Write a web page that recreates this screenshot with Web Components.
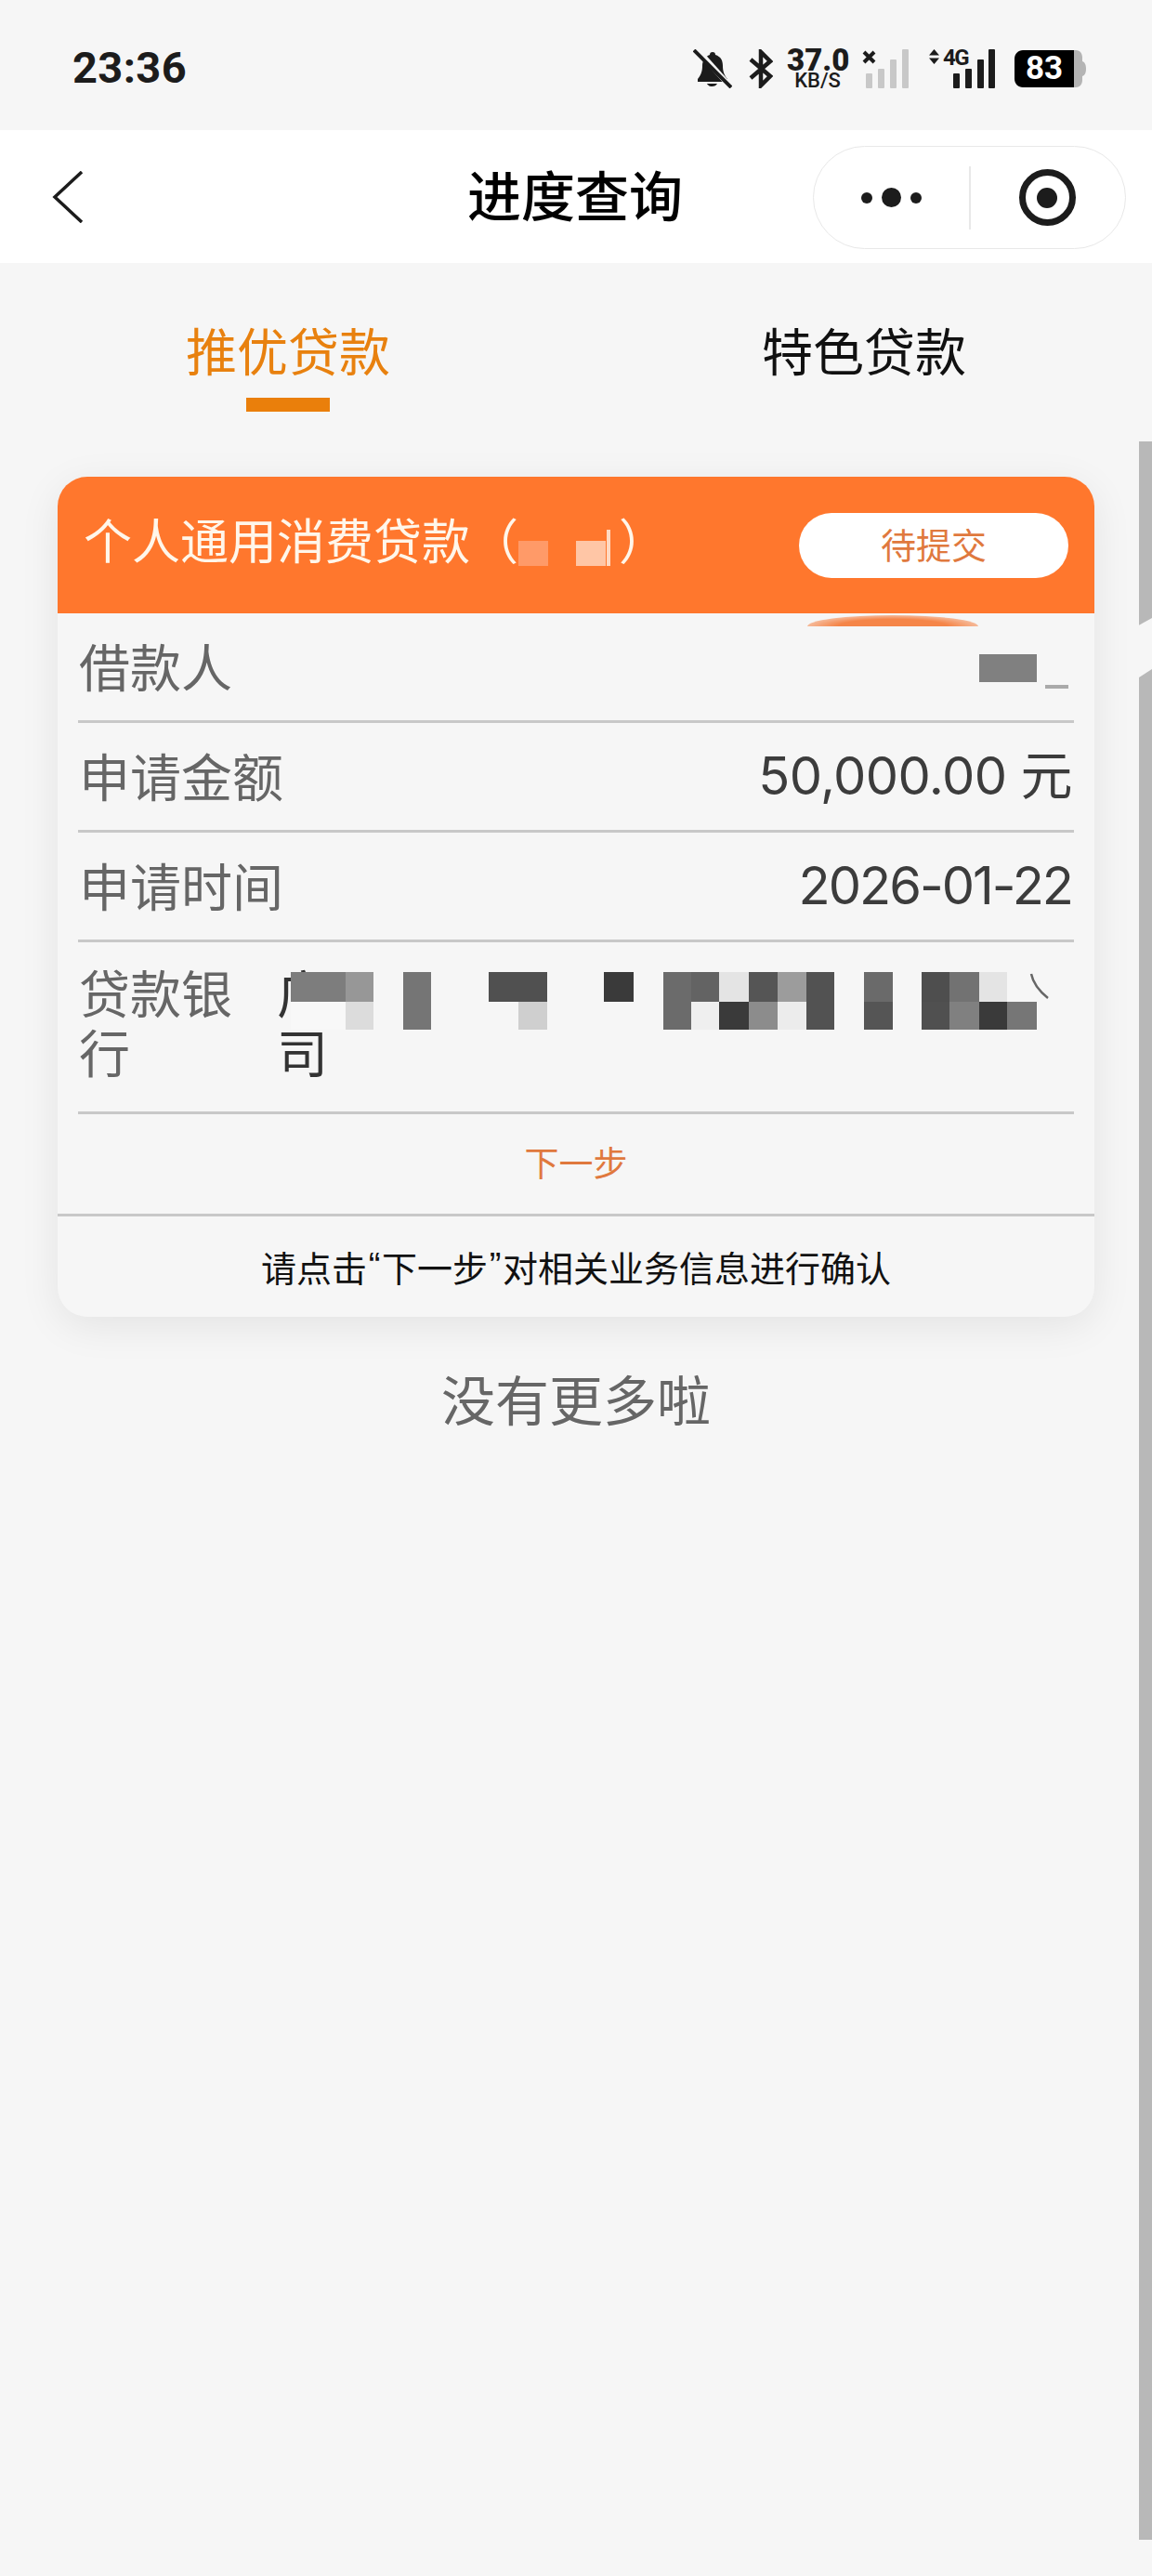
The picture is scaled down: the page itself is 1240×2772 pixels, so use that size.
<!DOCTYPE html>
<html lang="zh">
<head>
<meta charset="utf-8">
<title>进度查询</title>
<style>
  html, body { margin: 0; padding: 0; background: #f6f6f6; }
  body { width: 1240px; height: 2772px; overflow: hidden; font-family: "Noto Sans CJK SC", sans-serif; }
</style>
</head>
<body>
<status-bar></status-bar>
<nav-bar title="进度查询"></nav-bar>
<loan-tabs></loan-tabs>
<loan-card>
  <span slot="title">个人通用消费贷款</span>
  <span slot="status">待提交</span>
  <info-row label="借款人"></info-row>
  <info-row label="申请金额" value="50,000.00 元" spacing="-0.6"></info-row>
  <info-row label="申请时间" value="2026-01-22" spacing="-2"></info-row>
  <bank-row label="贷款银行"></bank-row>
</loan-card>
<end-note>没有更多啦</end-note>
<scroll-mark></scroll-mark>

<script>
class StatusBar extends HTMLElement {
  constructor () {
    super()
    this.shadow = this.attachShadow({ mode: 'open' })
  }

  connectedCallback () {
    this.shadow.innerHTML =
      /* html */
      `
      <style>
        :host { display: flex; align-items: center; height: 140px; box-sizing: border-box; padding: 8px 71px 0 78px; color: #1c1c1c; }
        .time { font: 700 47px/1 Roboto, sans-serif; letter-spacing: 0.4px; flex: 1; margin-top: -4px; }
        svg { display: block; }
        .speed { width: 66px; margin: 0 19px 0 15px; text-align: center; font-family: Roboto, sans-serif; font-weight: 700; }
        .speed b { display: block; font-size: 33px; line-height: 25px; }
        .speed i { display: block; font-style: normal; font-size: 22px; line-height: 19px; font-weight: 500; }
        .net { position: relative; width: 71px; height: 42px; }
        .net span { position: absolute; left: 15px; top: -5px; font: 700 24px/28px Roboto, sans-serif; letter-spacing: -1.500px; }
        .battery { position: relative; width: 77px; height: 40px; margin-left: 21px; font: 700 35px/40px Roboto, sans-serif; color: #fff; }
        .battery svg { position: absolute; left: 0; top: 0; }
        .battery span { position: absolute; left: 0; top: 0; width: 64px; text-align: center; }
      </style>
      <div class="time">23:36</div>
      <svg width="42" height="42" viewBox="0 0 42 42" fill="#1c1c1c">
        <path d="M21 3c2 0 3 1 3 3 6 2 8 6 8 12 0 5 1 9 5 14v3H5v-3c4-5 5-9 5-14 0-6 3-10 8-12 0-2 1-3 3-3z"/>
        <path d="M15 37h11c-1 2-3 3-5.500 3S16 39 15 37z"/>
        <path d="M5 1l36 40" stroke="#f6f6f6" stroke-width="6"/>
        <path d="M1 1l40 40" stroke="#1c1c1c" stroke-width="4"/>
      </svg>
      <svg width="26" height="42" viewBox="0 0 26 42" fill="none" stroke="#1c1c1c" stroke-width="4.500" style="margin-left:18px">
        <path d="M2 11l21 18-10 10V3l10 10L2 31"/>
      </svg>
      <div class="speed"><b>37.0</b><i>KB/S</i></div>
      <svg width="46" height="42" viewBox="0 0 46 42" style="margin-right:22px;overflow:visible">
        <g fill="#c8c8c8">
          <rect x="0" y="26" width="7" height="16" rx="1"/>
          <rect x="13" y="21" width="7" height="21" rx="1"/>
          <rect x="26" y="11" width="7" height="31" rx="1"/>
          <rect x="39" y="0" width="7" height="42" rx="1"/>
        </g>
        <path d="M-2 3l11 11M9 3L-2 14" stroke="#1c1c1c" stroke-width="4"/>
      </svg>
      <div class="net">
        <svg width="71" height="42" viewBox="0 0 71 42" fill="#1c1c1c">
          <path d="M5.500 0L11 6.500H0zM5.500 16L0 9.500h11z"/>
          <rect x="26" y="26" width="7" height="16" rx="1"/>
          <rect x="39" y="21" width="7" height="21" rx="1"/>
          <rect x="52" y="11" width="7" height="31" rx="1"/>
          <rect x="64" y="0" width="7" height="42" rx="1"/>
        </svg>
        <span>4G</span>
      </div>
      <div class="battery">
        <svg width="77" height="40" viewBox="0 0 77 40">
          <path d="M60 0h6c5 0 7 4 7 8v24c0 4-2 8-7 8h-6z M73 12c3 1 4 4 4 8s-1 7-4 8z" fill="#b4b4b4"/>
          <path d="M9 0h55v40H9c-5 0-9-4-9-9V9c0-5 4-9 9-9z" fill="#000"/>
        </svg>
        <span>83</span>
      </div>
      `
  }
}

class NavBar extends HTMLElement {
  constructor () {
    super()
    this.shadow = this.attachShadow({ mode: 'open' })
  }

  connectedCallback () {
    this.shadow.innerHTML =
      /* html */
      `
      <style>
        :host { display: block; position: relative; height: 143px; background: #fff; }
        .back { position: absolute; left: 56px; top: 44px; }
        h1 { margin: 0; padding-right: 2px; font: 500 58px/137px "Noto Sans CJK SC", sans-serif; color: #000; text-align: center; }
        .capsule { position: absolute; left: 875px; top: 17px; width: 337px; height: 111px; box-sizing: border-box; border: 1.500px solid #e8e8e8; border-radius: 56px; display: flex; align-items: center; background: #fff; }
        .more { width: 167px; display: flex; justify-content: center; align-items: center; gap: 10px; }
        .more i { width: 12px; height: 12px; border-radius: 50%; background: #1c1c1c; }
        .more i.big { width: 21px; height: 21px; }
        .sep { width: 1.500px; height: 68px; background: #e8e8e8; }
        .target { flex: 1; display: flex; justify-content: center; padding-right: 1px; }
        .ring { width: 61px; height: 61px; box-sizing: border-box; border: 7px solid #1c1c1c; border-radius: 50%; display: flex; align-items: center; justify-content: center; }
        .ring i { width: 22px; height: 22px; border-radius: 50%; background: #1c1c1c; }
      </style>
      <svg class="back" width="36" height="56" viewBox="0 0 36 56" fill="none" stroke="#1c1c1c" stroke-width="3.500">
        <path d="M32 1L3 28l29 27"/>
      </svg>
      <h1>${this.getAttribute('title')}</h1>
      <div class="capsule">
        <div class="more"><i></i><i class="big"></i><i></i></div>
        <div class="sep"></div>
        <div class="target"><div class="ring"><i></i></div></div>
      </div>
      `
  }
}

class LoanTabs extends HTMLElement {
  constructor () {
    super()
    this.shadow = this.attachShadow({ mode: 'open' })
  }

  connectedCallback () {
    this.shadow.innerHTML =
      /* html */
      `
      <style>
        :host { display: grid; grid-template-columns: 620px 620px; height: 230px; font: 400 55px/1 "Noto Sans CJK SC", sans-serif; color: #111; }
        .tab { display: flex; flex-direction: column; align-items: center; padding-top: 64px; }
        .tab span { line-height: 56px; }
        .active { color: #e8810f; }
        .active::after { content: ''; width: 90px; height: 15px; margin-top: 25px; background: #ea7f0b; }
      </style>
      <div class="tab active"><span>推优贷款</span></div>
      <div class="tab"><span>特色贷款</span></div>
      `
  }
}

class LoanCard extends HTMLElement {
  constructor () {
    super()
    this.shadow = this.attachShadow({ mode: 'open' })
  }

  connectedCallback () {
    this.shadow.innerHTML =
      /* html */
      `
      <style>
        :host { display: block; position: relative; width: 1116px; height: 904px; margin-left: 62px; border-radius: 32px; background: #f6f6f6; box-shadow: 0 10px 44px rgba(0,0,0,.08); font-family: "Noto Sans CJK SC", sans-serif; }
        header { position: relative; height: 147px; box-sizing: border-box; padding: 39px 28px 0 28px; border-radius: 32px 32px 0 0; background: #ff772d; display: flex; justify-content: space-between; align-items: flex-start; }
        .name { font-size: 52px; line-height: 56px; color: #fff6ea; display: flex; }
        .paren { white-space: pre; }
        .mask { position: absolute; top: 69px; height: 27px; }
        .m1 { left: 496px; width: 32px; background: #ff9a68; }
        .m2 { left: 558px; width: 32px; background: #ffc6a6; }
        .m3 { left: 591px; top: 57px; width: 4px; height: 39px; background: #ffd9c2; }
        .pill { width: 290px; height: 70px; border-radius: 35px; background: #fff; color: #e0793e; font-size: 38px; line-height: 66px; text-align: center; }
        .smear { position: absolute; left: 807px; top: 149px; width: 184px; height: 12px; border-radius: 50% 50% 0 0 / 100% 100% 0 0; background: radial-gradient(ellipse at 50% 100%, #f58548 45%, rgba(245,133,72,0) 100%); }
        .rows { display: block; }
        .next { height: 110px; box-sizing: border-box; padding-bottom: 6px; display: flex; align-items: center; justify-content: center; font-size: 37px; color: #e0793e; border-bottom: 3px solid #c8c8c8; }
        .tip { height: 110px; box-sizing: border-box; padding-bottom: 4px; display: flex; align-items: center; justify-content: center; font-size: 38px; color: #111; }
        .tip q { quotes: none; font-family: "Liberation Sans", sans-serif; width: 16px; text-align: center; }
      </style>
      <header>
        <div class="name"><slot name="title"></slot><span class="paren">（</span></div>
        <div class="paren name" style="position:absolute;left:604px;top:39px">）</div>
        <i class="mask m1"></i><i class="mask m2"></i><i class="mask m3"></i>
        <div class="pill"><slot name="status"></slot></div>
      </header>
      <i class="smear"></i>
      <div class="rows"><slot></slot></div>
      <div class="next">下一步</div>
      <div class="tip"><span>请点击</span><q>“</q><span>下一步</span><q>”</q><span>对相关业务信息进行确认</span></div>
      `
  }
}

class InfoRow extends HTMLElement {
  constructor () {
    super()
    this.shadow = this.attachShadow({ mode: 'open' })
  }

  connectedCallback () {
    const value = this.getAttribute('value')
    const spacing = this.getAttribute('spacing') || 0
    this.shadow.innerHTML =
      /* html */
      `
      <style>
        :host { display: flex; position: relative; justify-content: space-between; align-items: center; height: 118px; box-sizing: border-box; margin: 0 22px; padding: 0 2px 5px 1px; border-bottom: 3px solid #c8c8c8; font: 400 55px/1 "Noto Sans CJK SC", sans-serif; color: #666; }
        .value { margin-top: 3px; font-family: Inter, "Noto Sans CJK SC", sans-serif; font-size: 56px; letter-spacing: ${spacing}px; color: #3c3c3c; }
        .blot { position: absolute; left: 970px; top: 44px; width: 62px; height: 30px; background: #808080; }
        .dash { position: absolute; left: 1041px; top: 77px; width: 25px; height: 4px; background: #aaa; }
      </style>
      <span>${this.getAttribute('label')}</span>
      ${value ? `<span class="value">${value}</span>` : '<i class="blot"></i><i class="dash"></i>'}
      `
  }
}

class BankRow extends HTMLElement {
  constructor () {
    super()
    this.shadow = this.attachShadow({ mode: 'open' })
  }

  connectedCallback () {
    // top/bottom mosaic tiles, [x, width, top colour, bottom colour]
    const tiles = [
      [229, 59, '#7d7d7d', null], [288, 30, '#979797', '#dcdcdc'], [350, 30, '#757575', '#757575'],
      [442, 32, '#505050', null], [474, 31, '#505050', '#cfcfcf'], [566, 32, '#3a3a3a', null],
      [630, 30, '#6b6b6b', '#6b6b6b'], [660, 30, '#636363', '#efefef'], [690, 32, '#e4e4e4', '#3a3a3a'],
      [722, 31, '#555555', '#8c8c8c'], [753, 31, '#9c9c9c', '#ececec'], [784, 30, '#525252', '#525252'],
      [846, 31, '#6a6a6a', '#555555'], [908, 30, '#4e4e4e', '#505050'], [938, 32, '#727272', '#808080'],
      [970, 30, '#e4e4e4', '#3a3a3a'], [1000, 32, null, '#767676']
    ]
    const rects = tiles.map(([x, w, top, bottom]) =>
      (top ? `<rect x="${x}" y="0" width="${w}" height="32" fill="${top}"/>` : '') +
      (bottom ? `<rect x="${x}" y="32" width="${w}" height="30" fill="${bottom}"/>` : '')
    ).join('')
    this.shadow.innerHTML =
      /* html */
      `
      <style>
        :host { display: grid; position: relative; grid-template-columns: 165px 1fr; column-gap: 48px; align-items: start; height: 185px; box-sizing: border-box; margin: 0 22px; padding: 25px 2px 0 1px; border-bottom: 3px solid #c8c8c8; font: 400 55px/64px Roboto, "Noto Sans CJK SC", sans-serif; color: #666; }
        .bank { color: #333; }
        svg { position: absolute; left: 0; top: 32px; }
      </style>
      <span>${this.getAttribute('label')}</span>
      <span class="bank">广<br>司</span>
      <svg width="1072" height="62" viewBox="0 0 1072 62">
        <rect x="229" y="32" width="59" height="30" fill="#f8f8f8"/>
        ${rects}
        <path d="M1026 2c2 10 8 18 18 26" fill="none" stroke="#666" stroke-width="2.500"/>
      </svg>
      `
  }
}

class EndNote extends HTMLElement {
  constructor () {
    super()
    this.attachShadow({ mode: 'open' }).innerHTML =
      /* html */
      `
      <style>
        :host { display: block; margin-top: 55px; font: 400 58px/64px "Noto Sans CJK SC", sans-serif; color: #666; text-align: center; }
      </style>
      <slot></slot>
      `
  }
}

class ScrollMark extends HTMLElement {
  constructor () {
    super()
    this.attachShadow({ mode: 'open' }).innerHTML =
      /* html */
      `
      <style>
        :host { display: block; position: absolute; left: 1226px; top: 475px; width: 14px; height: 2258px; background: #b8b8b8; }
        i { position: absolute; left: 0; top: 190px; width: 14px; height: 64px; background: #f6f6f6; clip-path: polygon(0 12%, 100% 0, 100% 86%, 0 100%); }
      </style>
      <i></i>
      `
  }
}

customElements.define('status-bar', StatusBar)
customElements.define('nav-bar', NavBar)
customElements.define('loan-tabs', LoanTabs)
customElements.define('loan-card', LoanCard)
customElements.define('info-row', InfoRow)
customElements.define('bank-row', BankRow)
customElements.define('end-note', EndNote)
customElements.define('scroll-mark', ScrollMark)
</script>
</body>
</html>
